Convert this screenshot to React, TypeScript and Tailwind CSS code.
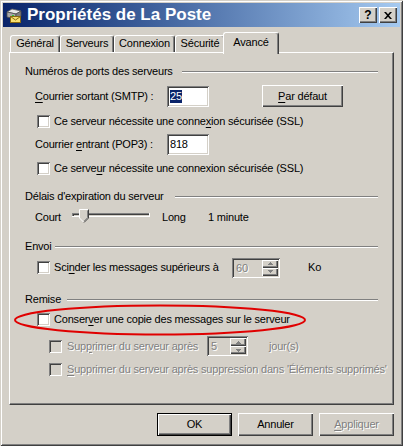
import type { ReactNode } from "react";

const sunken =
  "shadow-[inset_1px_1px_0_#808080,inset_-1px_-1px_0_#ffffff,inset_2px_2px_0_#404040,inset_-2px_-2px_0_#d4d0c8]";
const raised =
  "shadow-[inset_1px_1px_0_#ffffff,inset_-1px_-1px_0_#404040,inset_-2px_-2px_0_#808080]";
const dim = "text-[#808080] [text-shadow:1px_1px_0_#ffffff]";

function U({ children }: { children: ReactNode }) {
  return <span className="underline underline-offset-[2px]">{children}</span>;
}

function Check({ off }: { off?: boolean }) {
  return (
    <span
      className={`block h-[13px] w-[13px] shrink-0 ${off ? "bg-[#d4d0c8]" : "bg-white"} ${sunken}`}
    />
  );
}

function Group({ label, w }: { label: string; w: string }) {
  return (
    <div className="flex h-[13px] items-center">
      <span className={`${w} shrink-0 whitespace-nowrap`}>{label}</span>
      <div className="h-[2px] flex-1 border-t border-b border-t-[#808080] border-b-white" />
    </div>
  );
}

function SpinBtn({ up }: { up?: boolean }) {
  return (
    <div className={`flex flex-1 items-center justify-center bg-[#d4d0c8] ${raised}`}>
      <svg width="5" height="3" viewBox="0 0 5 3">
        <path
          d={up ? "M2 0h1v1h1v1h1v1H0V2h1V1h1z" : "M0 0h5v1H4v1H3v1H2V2H1V1H0z"}
          fill="#808080"
        />
      </svg>
    </div>
  );
}

function Spin({ value, w }: { value: string; w: string }) {
  return (
    <div className={`flex h-[20px] ${w} shrink-0 bg-[#d4d0c8] p-[2px] ${sunken}`}>
      <span className={`flex-1 pl-[2px] leading-[16px] ${dim}`}>{value}</span>
      <div className="flex w-[16px] flex-col">
        <SpinBtn up />
        <SpinBtn />
      </div>
    </div>
  );
}

function Btn({ children, def, off, w = "w-[75px]", h = "h-[23px]" }: {
  children: ReactNode;
  def?: boolean;
  off?: boolean;
  w?: string;
  h?: string;
}) {
  return (
    <div
      className={`flex ${w} ${h} items-center justify-center bg-[#d4d0c8] ${def ? "border border-black" : ""} ${raised} ${off ? dim : ""}`}
    >
      {children}
    </div>
  );
}

function Tab({ label, w, sel }: { label: string; w: string; sel?: boolean }) {
  return (
    <div
      className={`${w} flex items-start justify-center rounded-t-[3px] border-t border-l border-r border-t-white border-l-white border-r-[#404040] bg-[#d4d0c8] shadow-[inset_-1px_0_0_#808080] ${
        sel ? "relative z-10 -ml-[2px] mb-[-2px] h-[22px] pt-[3px]" : "h-[17px] pt-[1px]"
      }`}
    >
      {label}
    </div>
  );
}

function MailIcon() {
  return (
    <svg width="16" height="16" viewBox="0 0 16 16">
      <path d="M1 5 L6 2 L15 4 L10 7 Z" fill="#e8e8e8" stroke="#606060" strokeWidth="0.8" />
      <path d="M1 5 V10 L10 12 V7 Z" fill="#a8a8a8" stroke="#505050" strokeWidth="0.8" />
      <path d="M10 7 L15 4 V9 L10 12 Z" fill="#808080" stroke="#505050" strokeWidth="0.8" />
      <rect x="6" y="8" width="2" height="1" fill="#30c030" />
      <rect x="4.5" y="9.5" width="10" height="6" fill="#f8e070" stroke="#8a6a10" />
      <path d="M4.5 9.5 L9.5 13 L14.5 9.5" fill="none" stroke="#8a6a10" />
    </svg>
  );
}

export default function App() {
  return (
    <div className="relative h-[446px] w-[403px] overflow-hidden bg-[#d4d0c8] p-[3px] font-['Liberation_Sans',Arial,sans-serif] text-[11px] leading-[13px] tracking-[-0.2px] text-black shadow-[inset_1px_1px_0_#d4d0c8,inset_-1px_-1px_0_#404040,inset_2px_2px_0_#ffffff,inset_-2px_-2px_0_#808080]">
      {/* title bar */}
      <div className="flex h-[24px] items-center bg-linear-to-r from-[#0a246a] to-[#a6caf0] pl-[3px] pr-[3px] tracking-normal">
        <MailIcon />
        <span className="ml-[5px] flex-1 text-[17px] leading-[20px] font-bold text-white">
          Propriétés de La Poste
        </span>
        <div className="flex gap-[2px]">
          <div className={`flex h-[16px] w-[18px] items-center justify-center bg-[#d4d0c8] text-[12px] leading-[12px] font-bold ${raised}`}>
            ?
          </div>
          <div className={`flex h-[16px] w-[18px] items-center justify-center bg-[#d4d0c8] ${raised}`}>
            <svg width="8" height="7" viewBox="0 0 8 7">
              <path d="M0 0h2l2 2.3L6 0h2L5 3.5 8 7H6L4 4.7 2 7H0l3-3.5z" fill="#000" />
            </svg>
          </div>
        </div>
      </div>

      {/* tabs */}
      <div className="relative z-10 mt-[5px] flex h-[20px] items-end pl-[7px]">
        <Tab label="Général" w="w-[50px]" />
        <Tab label="Serveurs" w="w-[54px]" />
        <Tab label="Connexion" w="w-[61px]" />
        <Tab label="Sécurité" w="w-[50px]" />
        <Tab label="Avancé" w="w-[56px]" sel />
      </div>

      {/* tab page */}
      <div className="ml-[6px] flex h-[353px] w-[385px] flex-col border border-t-white border-l-white border-r-[#404040] border-b-[#404040] px-[15px] pt-[12px] shadow-[inset_-1px_-1px_0_#808080]">
        <Group label="Numéros de ports des serveurs" w="w-[157px]" />

        <div className="mt-[7px] flex h-[22px] items-center pl-[10px]">
          <span className="w-[132px] shrink-0">
            <U>C</U>ourrier sortant (SMTP) :
          </span>
          <div className={`flex h-[21px] w-[42px] items-center bg-white pl-[3px] ${sunken}`}>
            <span className="bg-[#0a246a] text-white">25</span>
          </div>
          <div className="ml-[53px]">
            <Btn w="w-[81px]" h="h-[22px]">
              <span>
                <U>P</U>ar défaut
              </span>
            </Btn>
          </div>
        </div>

        <div className="mt-[7px] flex h-[14px] items-center gap-[4px] pl-[12px]">
          <Check />
          <span>
            Ce serveur nécessite une conne<U>x</U>ion sécurisée (SSL)
          </span>
        </div>

        <div className="mt-[5px] flex h-[22px] items-center pl-[10px]">
          <span className="w-[132px] shrink-0">
            Courrier <U>e</U>ntrant (POP3) :
          </span>
          <div className={`flex h-[21px] w-[42px] items-center bg-white pl-[3px] ${sunken}`}>
            818
          </div>
        </div>

        <div className="mt-[6px] flex h-[14px] items-center gap-[4px] pl-[12px]">
          <Check />
          <span>
            Ce serve<U>u</U>r nécessite une connexion sécurisée (SSL)
          </span>
        </div>

        <div className="mt-[15px]">
          <Group label="Délais d'expiration du serveur" w="w-[150px]" />
        </div>

        <div className="mt-[4px] flex h-[20px] items-center pl-[10px]">
          <span className="w-[37px] shrink-0">Court</span>
          <svg width="80" height="20" viewBox="0 0 80 20" className="shrink-0">
            <rect x="0" y="6" width="78" height="4" fill="#ffffff" />
            <rect x="0" y="6" width="77" height="1" fill="#808080" />
            <rect x="0" y="6" width="1" height="3" fill="#808080" />
            <rect x="1" y="7" width="76" height="1" fill="#404040" />
            <rect x="1" y="7" width="1" height="2" fill="#404040" />
            <rect x="2" y="8" width="75" height="1" fill="#d4d0c8" />
            <path d="M7 2h10v9l-5 5-5-5z" fill="#d4d0c8" />
            <path d="M7.5 11V2.5h9" fill="none" stroke="#ffffff" />
            <path d="M16.5 2.5v8.5l-4.5 4.5" fill="none" stroke="#404040" />
            <path d="M15.5 3.5v7.2l-3.5 3.5" fill="none" stroke="#808080" />
            <path d="M7.5 11l4 4" fill="none" stroke="#ffffff" />
          </svg>
          <span className="ml-[10px] w-[46px] shrink-0">Long</span>
          <span>1 minute</span>
        </div>

        <div className="mt-[13px]">
          <Group label="Envoi" w="w-[30px]" />
        </div>

        <div className="mt-[4px] flex h-[21px] items-center pl-[12px]">
          <Check />
          <span className="ml-[4px] w-[178px] shrink-0">
            Sci<U>n</U>der les messages supérieurs à
          </span>
          <Spin value="60" w="w-[48px]" />
          <span className="ml-[28px]">Ko</span>
        </div>

        <div className="mt-[15px]">
          <Group label="Remise" w="w-[42px]" />
        </div>

        <div className="mt-[6px] flex h-[14px] items-center gap-[4px] pl-[12px]">
          <Check />
          <span>
            Conser<U>v</U>er une copie des messages sur le serveur
          </span>
        </div>

        <div className="mt-[9px] flex h-[22px] items-center pl-[24px]">
          <Check off />
          <span className={`ml-[5px] w-[140px] shrink-0 ${dim}`}>
            Sup<U>p</U>rimer du serveur après
          </span>
          <Spin value="5" w="w-[41px]" />
          <span className={`ml-[21px] ${dim}`}>jour(s)</span>
        </div>

        <div className="mt-[5px] flex h-[14px] items-center pl-[24px]">
          <Check off />
          <span className={`ml-[5px] whitespace-nowrap ${dim}`}>
            <U>S</U>upprimer du serveur après suppression dans 'Éléments supprimés'
          </span>
        </div>
      </div>

      {/* dialog buttons */}
      <div className="mt-[8px] ml-[6px] flex w-[385px] justify-end gap-[6px]">
        <Btn def>OK</Btn>
        <Btn>Annuler</Btn>
        <Btn off>
          <span>
            <U>A</U>ppliquer
          </span>
        </Btn>
      </div>

      {/* red highlight drawn over the dialog */}
      <svg
        className="pointer-events-none absolute top-[303px] left-[12px]"
        width="296"
        height="34"
        viewBox="0 0 296 34"
      >
        <ellipse cx="148" cy="17" rx="145" ry="14.5" fill="none" stroke="#e00000" strokeWidth="2" />
      </svg>
    </div>
  );
}
